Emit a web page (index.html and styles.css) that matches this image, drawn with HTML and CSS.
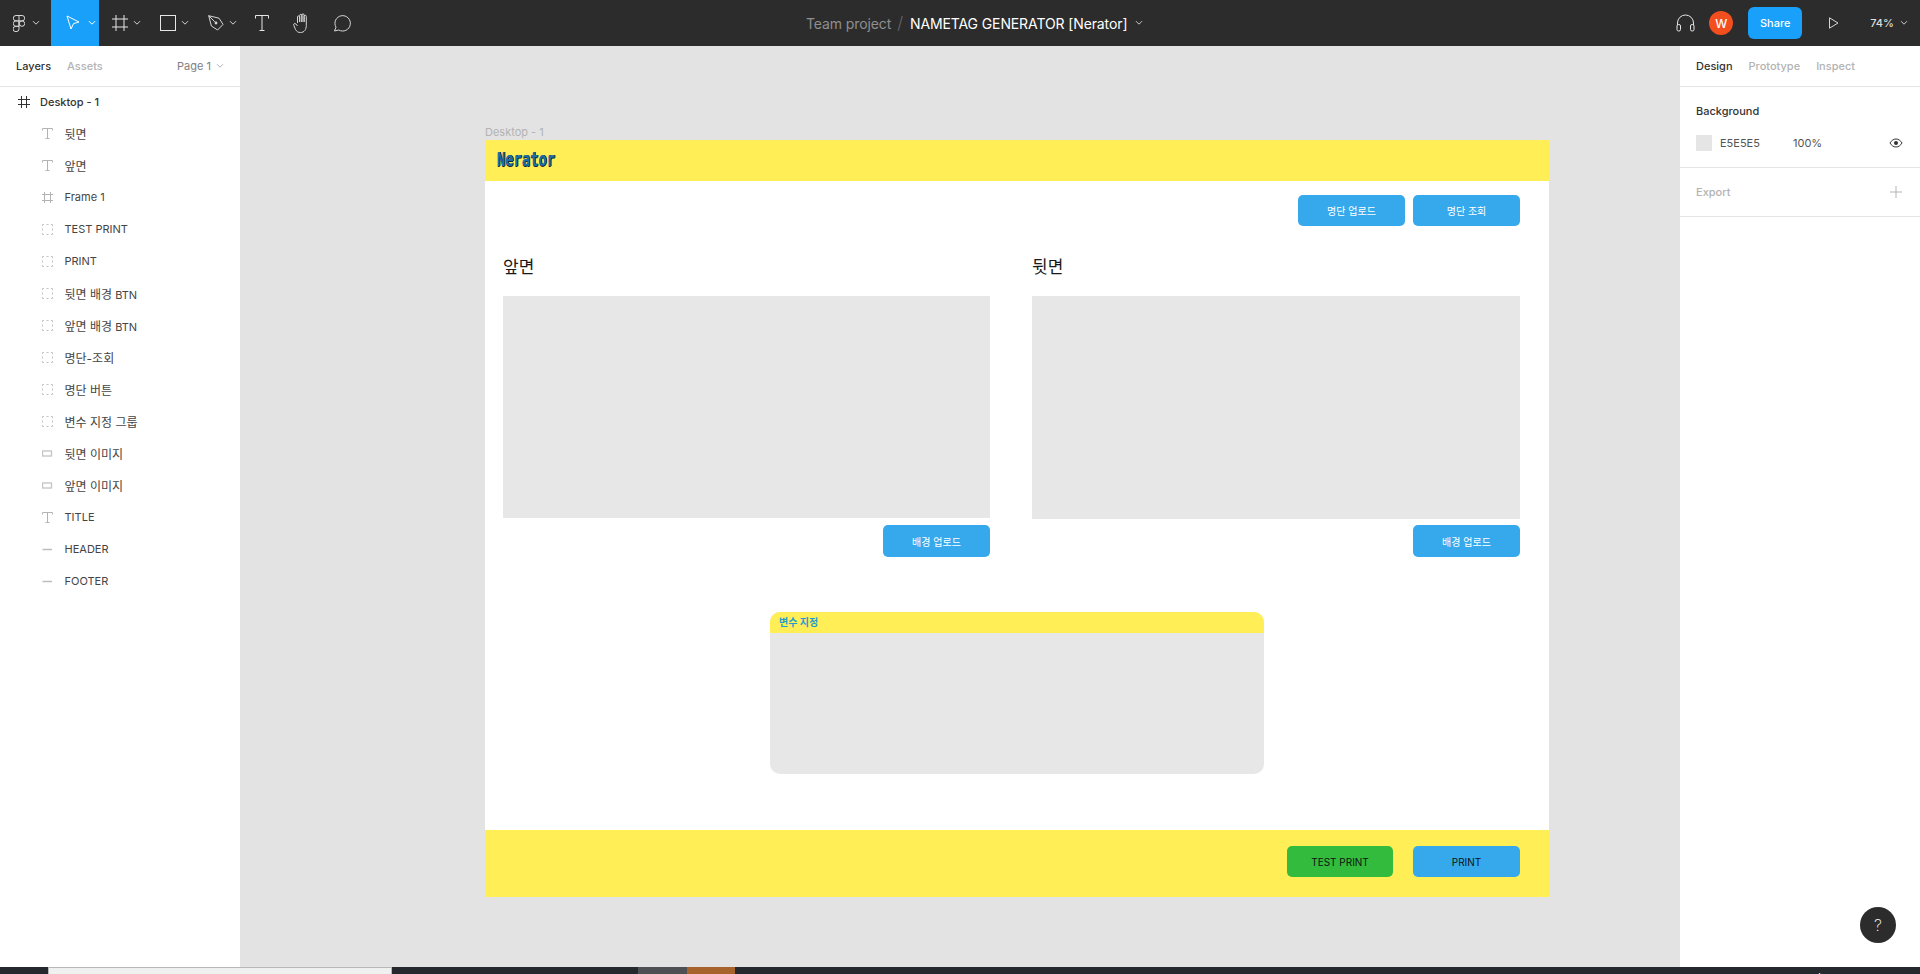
FILE: index.html
```html
<!DOCTYPE html>
<html lang="ko">
<head>
<meta charset="utf-8">
<title>NAMETAG GENERATOR [Nerator]</title>
<link rel="stylesheet" href="styles.css">
</head>
<body>
<svg class="defs" width="0" height="0" aria-hidden="true">
  <symbol id="chev" viewBox="0 0 8 6"><path d="M1 1.2 4 4.2 7 1.2" fill="none" stroke="currentColor"/></symbol>
  <symbol id="i-text" viewBox="0 0 11 11"><path d="M.5 2.500V.5h10v2M5.500.5v10M3.500 10.500h4" fill="none" stroke="#b3b3b3"/></symbol>
  <symbol id="i-frame" viewBox="0 0 11 11"><path d="M2.500 0v11M8.500 0v11M0 2.500h11M0 8.500h11" fill="none" stroke="#b3b3b3"/></symbol>
  <symbol id="i-frame-dark" viewBox="0 0 12 12"><path d="M3.500 0v12M8.500 0v12M0 3.500h12M0 8.500h12" fill="none" stroke="#333"/></symbol>
  <symbol id="i-group" viewBox="0 0 11 11"><path d="M.5 2V.5H2M4.500.5h2M9 .5h1.500V2M10.500 4.500v2M10.500 9v1.500H9M6.500 10.500h-2M2 10.500H.5V9M.5 6.500v-2" fill="none" stroke="#c4c4c4"/></symbol>
  <symbol id="i-rect" viewBox="0 0 11 11"><rect x=".5" y="3" width="9" height="5" fill="none" stroke="#c4c4c4" stroke-width="1.300"/></symbol>
  <symbol id="i-line" viewBox="0 0 11 11"><path d="M.5 5.500h9.500" fill="none" stroke="#bdbdbd" stroke-width="1.500"/></symbol>
</svg>

<div class="app">
  <header class="topbar">
    <div class="tools">
      <div class="tool tool-logo">
        <svg class="ic-logo" viewBox="0 0 12 17"><path d="M3 .5h6a2.700 2.700 0 0 1 0 5.400H3A2.700 2.700 0 0 1 3 .5ZM3 5.900h3v5.400H3a2.700 2.700 0 0 1 0-5.400ZM6 .5v10.800M3 11.300h3v2.700a3 2.700 0 1 1-3-2.700Z" fill="none" stroke="#d6d6d6"/><circle cx="9" cy="8.600" r="2.700" fill="none" stroke="#d6d6d6"/></svg>
        <svg class="chev"><use href="#chev"/></svg>
      </div>
      <div class="tool tool-move">
        <svg class="ic-move" viewBox="0 0 14 16"><path d="M1 1 13 7 7.500 8.600 5 14Z" fill="none" stroke="#fff" stroke-linejoin="round"/></svg>
        <svg class="chev"><use href="#chev"/></svg>
      </div>
      <div class="tool tool-wide">
        <svg class="ic" viewBox="0 0 16 16"><path d="M4 0v16M12 0v16M0 4h16M0 12h16" fill="none" stroke="#e6e6e6"/></svg>
        <svg class="chev"><use href="#chev"/></svg>
      </div>
      <div class="tool tool-wide">
        <svg class="ic" viewBox="0 0 16 16"><rect x=".5" y=".5" width="15" height="15" fill="none" stroke="#e6e6e6"/></svg>
        <svg class="chev"><use href="#chev"/></svg>
      </div>
      <div class="tool tool-wide">
        <svg class="ic" viewBox="0 0 16 16"><path d="M.7.7 11 3.200 15 9.400 9.600 15 3.400 11Z" fill="none" stroke="#d6d6d6" stroke-linejoin="round"/><path d="M.7.7 6.800 6.800" stroke="#d6d6d6"/><circle cx="8" cy="8" r="1.400" fill="#d6d6d6"/></svg>
        <svg class="chev"><use href="#chev"/></svg>
      </div>
      <div class="tool tool-t">
        <svg class="ic-t" viewBox="0 0 14 16"><path d="M.5 3.500V.5h13v3M7 .5v15M4.500 15.500h5" fill="none" stroke="#e6e6e6"/></svg>
      </div>
      <div class="tool tool-hand">
        <svg class="ic-hand" viewBox="0 0 19 20"><path d="M4.500 10V4a1.100 1.100 0 0 1 2.200 0V9M6.700 9V2.400a1.100 1.100 0 0 1 2.200 0V9M8.900 9V2a1.100 1.100 0 0 1 2.200 0v7M11.100 9V3.400a1.100 1.100 0 0 1 2.200 0v9.100c0 4-2 7-5.800 7-2.500 0-3.900-1-5-3L.8 12.300c-.7-1.500 1.100-2.400 2.100-1.300L4.500 13" fill="none" stroke="#d6d6d6" stroke-linejoin="round"/></svg>
      </div>
      <div class="tool tool-comment">
        <svg class="ic-comment" viewBox="0 0 18 17"><path d="M1.500 16 3 12.200A7.700 7.700 0 1 1 5.800 15Z" fill="none" stroke="#d6d6d6" stroke-linejoin="round"/></svg>
      </div>
    </div>

    <div class="title-wrap">
      <span class="crumb">Team project</span>
      <span class="slash">/</span>
      <span class="doc">NAMETAG GENERATOR [Nerator]</span>
      <svg class="chev chev-doc"><use href="#chev"/></svg>
    </div>

    <div class="actions">
      <svg class="ic-head" viewBox="0 0 19 18"><path d="M1.500 11V9a8 8 0 0 1 16 0v2" fill="none" stroke="#e6e6e6"/><rect x="1" y="10.500" width="3.500" height="6.500" rx="1.500" fill="none" stroke="#e6e6e6"/><rect x="14.500" y="10.500" width="3.500" height="6.500" rx="1.500" fill="none" stroke="#e6e6e6"/></svg>
      <div class="avatar">W</div>
      <div class="share">Share</div>
      <svg class="ic-play" viewBox="0 0 10 12"><path d="M.5.800 9 6 .5 11.200Z" fill="none" stroke="#d6d6d6"/></svg>
      <span class="zoom">74%</span>
      <svg class="chev chev-zoom"><use href="#chev"/></svg>
    </div>
  </header>

  <aside class="left">
    <div class="panel-tabs">
      <span class="tab tab-on">Layers</span>
      <span class="tab">Assets</span>
      <span class="page">Page 1<svg class="chev"><use href="#chev"/></svg></span>
    </div>
    <ul class="layers">
      <li class="row row-top"><svg class="row-ic"><use href="#i-frame-dark"/></svg>Desktop - 1</li>
      <li class="row"><svg class="row-ic"><use href="#i-text"/></svg><span class="ko">뒷면</span></li>
      <li class="row"><svg class="row-ic"><use href="#i-text"/></svg><span class="ko">앞면</span></li>
      <li class="row"><svg class="row-ic"><use href="#i-frame"/></svg>Frame 1</li>
      <li class="row"><svg class="row-ic"><use href="#i-group"/></svg>TEST PRINT</li>
      <li class="row"><svg class="row-ic"><use href="#i-group"/></svg>PRINT</li>
      <li class="row"><svg class="row-ic"><use href="#i-group"/></svg><span><span class="ko">뒷면 배경</span> BTN</span></li>
      <li class="row"><svg class="row-ic"><use href="#i-group"/></svg><span><span class="ko">앞면 배경</span> BTN</span></li>
      <li class="row"><svg class="row-ic"><use href="#i-group"/></svg><span class="ko">명단-조회</span></li>
      <li class="row"><svg class="row-ic"><use href="#i-group"/></svg><span class="ko">명단 버튼</span></li>
      <li class="row"><svg class="row-ic"><use href="#i-group"/></svg><span class="ko">변수 지정 그룹</span></li>
      <li class="row"><svg class="row-ic"><use href="#i-rect"/></svg><span class="ko">뒷면 이미지</span></li>
      <li class="row"><svg class="row-ic"><use href="#i-rect"/></svg><span class="ko">앞면 이미지</span></li>
      <li class="row"><svg class="row-ic"><use href="#i-text"/></svg>TITLE</li>
      <li class="row"><svg class="row-ic"><use href="#i-line"/></svg>HEADER</li>
      <li class="row"><svg class="row-ic"><use href="#i-line"/></svg>FOOTER</li>
    </ul>
  </aside>

  <main class="canvas">
    <div class="frame-label">Desktop - 1</div>
    <section class="frame">
      <div class="f-header"><span class="logo">Nerator</span></div>
      <div class="f-toolbar">
        <button class="btn">명단 업로드</button>
        <button class="btn">명단 조회</button>
      </div>
      <div class="f-cols">
        <div class="col col-front">
          <h2 class="col-title">앞면</h2>
          <div class="preview"></div>
          <button class="btn btn-bg">배경 업로드</button>
        </div>
        <div class="col col-back">
          <h2 class="col-title">뒷면</h2>
          <div class="preview"></div>
          <button class="btn btn-bg">배경 업로드</button>
        </div>
      </div>
      <div class="vars">
        <div class="vars-head">변수 지정</div>
      </div>
      <div class="f-footer">
        <button class="btn btn-dark btn-green">TEST PRINT</button>
        <button class="btn btn-dark">PRINT</button>
      </div>
    </section>
  </main>

  <aside class="right">
    <div class="panel-tabs">
      <span class="tab tab-on">Design</span>
      <span class="tab">Prototype</span>
      <span class="tab">Inspect</span>
    </div>
    <div class="section section-bg">
      <div class="section-title">Background</div>
      <div class="fill">
        <span class="swatch"></span>
        <span class="hex">E5E5E5</span>
        <span class="pct">100%</span>
        <svg class="eye" viewBox="0 0 14 10"><path d="M1 5C2.500 2.500 4.500 1 7 1s4.500 1.500 6 4c-1.500 2.500-3.500 4-6 4S2.500 7.500 1 5Z" fill="none" stroke="#333"/><circle cx="7" cy="5" r="2" fill="#333"/></svg>
      </div>
    </div>
    <div class="section section-export">
      <span class="export">Export</span>
      <svg class="plus" viewBox="0 0 12 12"><path d="M6 0v12M0 6h12" stroke="#b3b3b3" fill="none"/></svg>
    </div>
    <div class="help">?</div>
  </aside>

  <footer class="taskbar">
    <span class="tb tb-a"></span>
    <span class="tb tb-b"></span>
    <span class="tb tb-c"></span>
    <span class="tb tb-d"></span>
    <span class="tb tb-e"></span>
    <span class="tb tb-f"></span>
    <span class="clock">오후 3:30</span>
  </footer>
</div>
</body>
</html>
```

FILE: styles.css
```css
* { box-sizing: border-box; }
html, body { margin: 0; height: 100%; overflow: hidden; }
body {
  font-family: Inter, "Noto Sans CJK KR", sans-serif;
  font-size: 11px;
  color: #333;
  background: #e3e3e3;
}
.defs { position: absolute; }
.app {
  width: 1920px;
  height: 974px;
  display: grid;
  grid-template-columns: 240px 1fr 240px;
  grid-template-rows: 46px 1fr 7px;
}

/* top bar */
.topbar {
  grid-column: 1 / -1;
  position: relative;
  display: flex;
  justify-content: space-between;
  align-items: stretch;
  background: #2c2c2c;
  color: #fff;
}
.tools { display: flex; align-items: stretch; }
.tool { display: flex; align-items: center; color: #d6d6d6; }
.chev { width: 8px; height: 6px; display: block; flex: none; }
.tool-logo { width: 51px; padding-left: 13px; gap: 7px; }
.ic-logo { width: 12px; height: 17px; }
.tool-move { width: 48px; padding-left: 15px; gap: 8px; background: #18a0fb; color: #fff; }
.ic-move { width: 14px; height: 16px; }
.tool-wide { width: 48px; padding-left: 14px; gap: 5px; }
.ic { width: 16px; height: 16px; flex: none; }
.tool-wide:nth-child(3) { margin-left: -1px; }
.tool-t { width: 37px; padding-left: 13px; }
.ic-t { width: 14px; height: 16px; }
.tool-hand { width: 54px; padding-left: 14px; }
.ic-hand { width: 19px; height: 20px; }
.ic-comment { width: 18px; height: 17px; }

.title-wrap {
  position: absolute;
  left: 806px;
  top: 0;
  height: 46px;
  display: flex;
  align-items: center;
  font-size: 14px;
  letter-spacing: -.11px;
}
.crumb { color: #8f8f8f; }
.slash { color: #666; margin: 0 7px 0 6px; font-size: 17px; font-weight: 300; }
.doc { color: #fff; }
.chev-doc { margin-left: 8px; color: #ccc; }

.actions { display: flex; align-items: center; padding-right: 12px; }
.ic-head { width: 19px; height: 18px; }
.avatar {
  width: 24px; height: 24px; margin-left: 14px;
  border-radius: 50%;
  background: #f24e1e;
  color: #fff;
  display: flex; align-items: center; justify-content: center;
  font-size: 12px; font-weight: 500;
}
.share {
  width: 54px; height: 32px; margin-left: 15px;
  border-radius: 6px;
  background: #18a0fb;
  color: #fff;
  display: flex; align-items: center; justify-content: center;
  font-weight: 500;
}
.ic-play { width: 10px; height: 12px; margin-left: 27px; }
.zoom { margin-left: 31px; color: #ddd; font-weight: 500; }
.chev-zoom { margin-left: 6px; color: #ccc; }

/* side panels */
.left, .right { background: #fff; position: relative; }
.panel-tabs {
  height: 41px;
  display: flex;
  align-items: center;
  gap: 16px;
  padding: 0 16px;
  border-bottom: 1px solid #e5e5e5;
}
.tab { color: #b3b3b3; font-weight: 500; }
.tab-on { color: #333; }
.page { margin-left: auto; color: #808080; display: flex; align-items: center; gap: 5px; }
.page .chev { color: #b3b3b3; }
.layers { list-style: none; margin: 0; padding: 0; }
.row {
  height: 32px;
  display: flex;
  align-items: center;
  padding-left: 42px;
  gap: 11.5px;
  color: #444;
}
.ko { font-size: 12px; }
.row-ic { width: 11px; height: 11px; flex: none; }
.row-top { padding-left: 18px; gap: 10px; font-weight: 500; color: #333; height: 30px; }
.row-top .row-ic { width: 12px; height: 12px; }

/* canvas */
.canvas {
  background: #e3e3e3;
  padding: 79px 0 0 245px;
  overflow: hidden;
}
.frame-label { height: 15px; color: #b3b3b3; line-height: 15px; }
.frame {
  width: 1064px;
  height: 757px;
  background: #fff;
  display: flex;
  flex-direction: column;
}
.f-header {
  height: 41px;
  background: #ffee55;
  display: flex;
  align-items: center;
  padding: 0 0 3px 12px;
  flex: none;
}
.logo {
  display: inline-block;
  font-family: "DejaVu Sans Mono", monospace;
  font-weight: 700;
  font-size: 20px;
  line-height: 20px;
  color: #1d6fa8;
  text-shadow: 1px 0 0 #123, 0 1px 0 #123;
  transform: scaleX(.69);
  transform-origin: left center;
}
.f-toolbar {
  display: flex;
  justify-content: flex-end;
  gap: 8px;
  padding: 14px 29px 0 0;
}
.btn {
  width: 107px;
  height: 31px;
  border: 0;
  padding: 0;
  border-radius: 5px;
  background: #35a9ec;
  color: #fff;
  font: 400 10px Inter, "Noto Sans CJK KR", sans-serif;
}
.f-cols {
  display: flex;
  justify-content: space-between;
  padding: 0 29px 0 18px;
}
.col { display: flex; flex-direction: column; }
.col-front { width: 487px; }
.col-back { width: 488px; }
.col-title {
  margin: 0;
  height: 70px;
  padding-top: 30px;
  font-weight: 400;
  font-size: 17px;
  line-height: 22px;
  color: #1a1a1a;
}
.preview { height: 223px; background: #e7e7e7; }
.col-front .preview { height: 222px; }
.btn-bg { align-self: flex-end; margin-top: 6px; height: 32px; }
.col-front .btn-bg { margin-top: 7px; }
.vars {
  width: 494px;
  height: 162px;
  margin: 55px 0 0 285px;
  background: #e7e7e7;
  border-radius: 10px;
  overflow: hidden;
}
.vars-head {
  height: 21px;
  background: #ffee55;
  padding-left: 9px;
  color: #1f9bd1;
  font-size: 10px;
  font-weight: 700;
  line-height: 21px;
}
.f-footer {
  margin-top: auto;
  height: 67px;
  background: #ffee55;
  display: flex;
  justify-content: flex-end;
  align-items: flex-start;
  gap: 20px;
  padding: 16px 29px 0 0;
  flex: none;
}
.btn-dark { color: #111; }
.f-footer .btn-green { width: 106px; background: #33bb3d; }

/* right panel */
.section { border-bottom: 1px solid #e5e5e5; padding: 0 16px; }
.section-bg { height: 81px; }
.section-title { font-weight: 500; color: #333; padding-top: 16px; line-height: 16px; }
.fill { display: flex; align-items: center; height: 16px; margin-top: 16px; color: #555; }
.swatch { width: 16px; height: 16px; background: #e5e5e5; flex: none; }
.hex { margin-left: 8px; width: 73px; }
.pct { flex: 1; }
.eye { width: 14px; height: 10px; margin-right: 1px; }
.section-export { height: 49px; display: flex; align-items: center; justify-content: space-between; }
.export { color: #b3b3b3; font-weight: 500; }
.plus { width: 12px; height: 12px; margin-right: 2px; }
.help {
  position: absolute;
  left: 180px;
  bottom: 24px;
  width: 36px;
  height: 36px;
  border-radius: 50%;
  background: #2c2c2c;
  color: #fff;
  font-size: 16px;
  font-weight: 200;
  display: flex;
  align-items: center;
  justify-content: center;
}

/* taskbar sliver */
.taskbar {
  grid-column: 1 / -1;
  position: relative;
  display: flex;
  background: #25282c;
  overflow: hidden;
}
.tb { display: block; height: 7px; flex: none; }
.tb-a { width: 48px; }
.tb-b { width: 344px; background: #f0f0f0; border-top: 1px solid #b8b8b8; border-left: 1px solid #b8b8b8; border-right: 1px solid #b8b8b8; }
.tb-c { width: 246px; }
.tb-d { width: 49px; background: #4f5053; }
.tb-e { width: 48px; background: #a8622c; }
.tb-f { width: 1px; }
.clock {
  position: absolute;
  left: 1803px;
  top: 5px;
  color: #fff;
  font-size: 12px;
  line-height: 16px;
}
```
